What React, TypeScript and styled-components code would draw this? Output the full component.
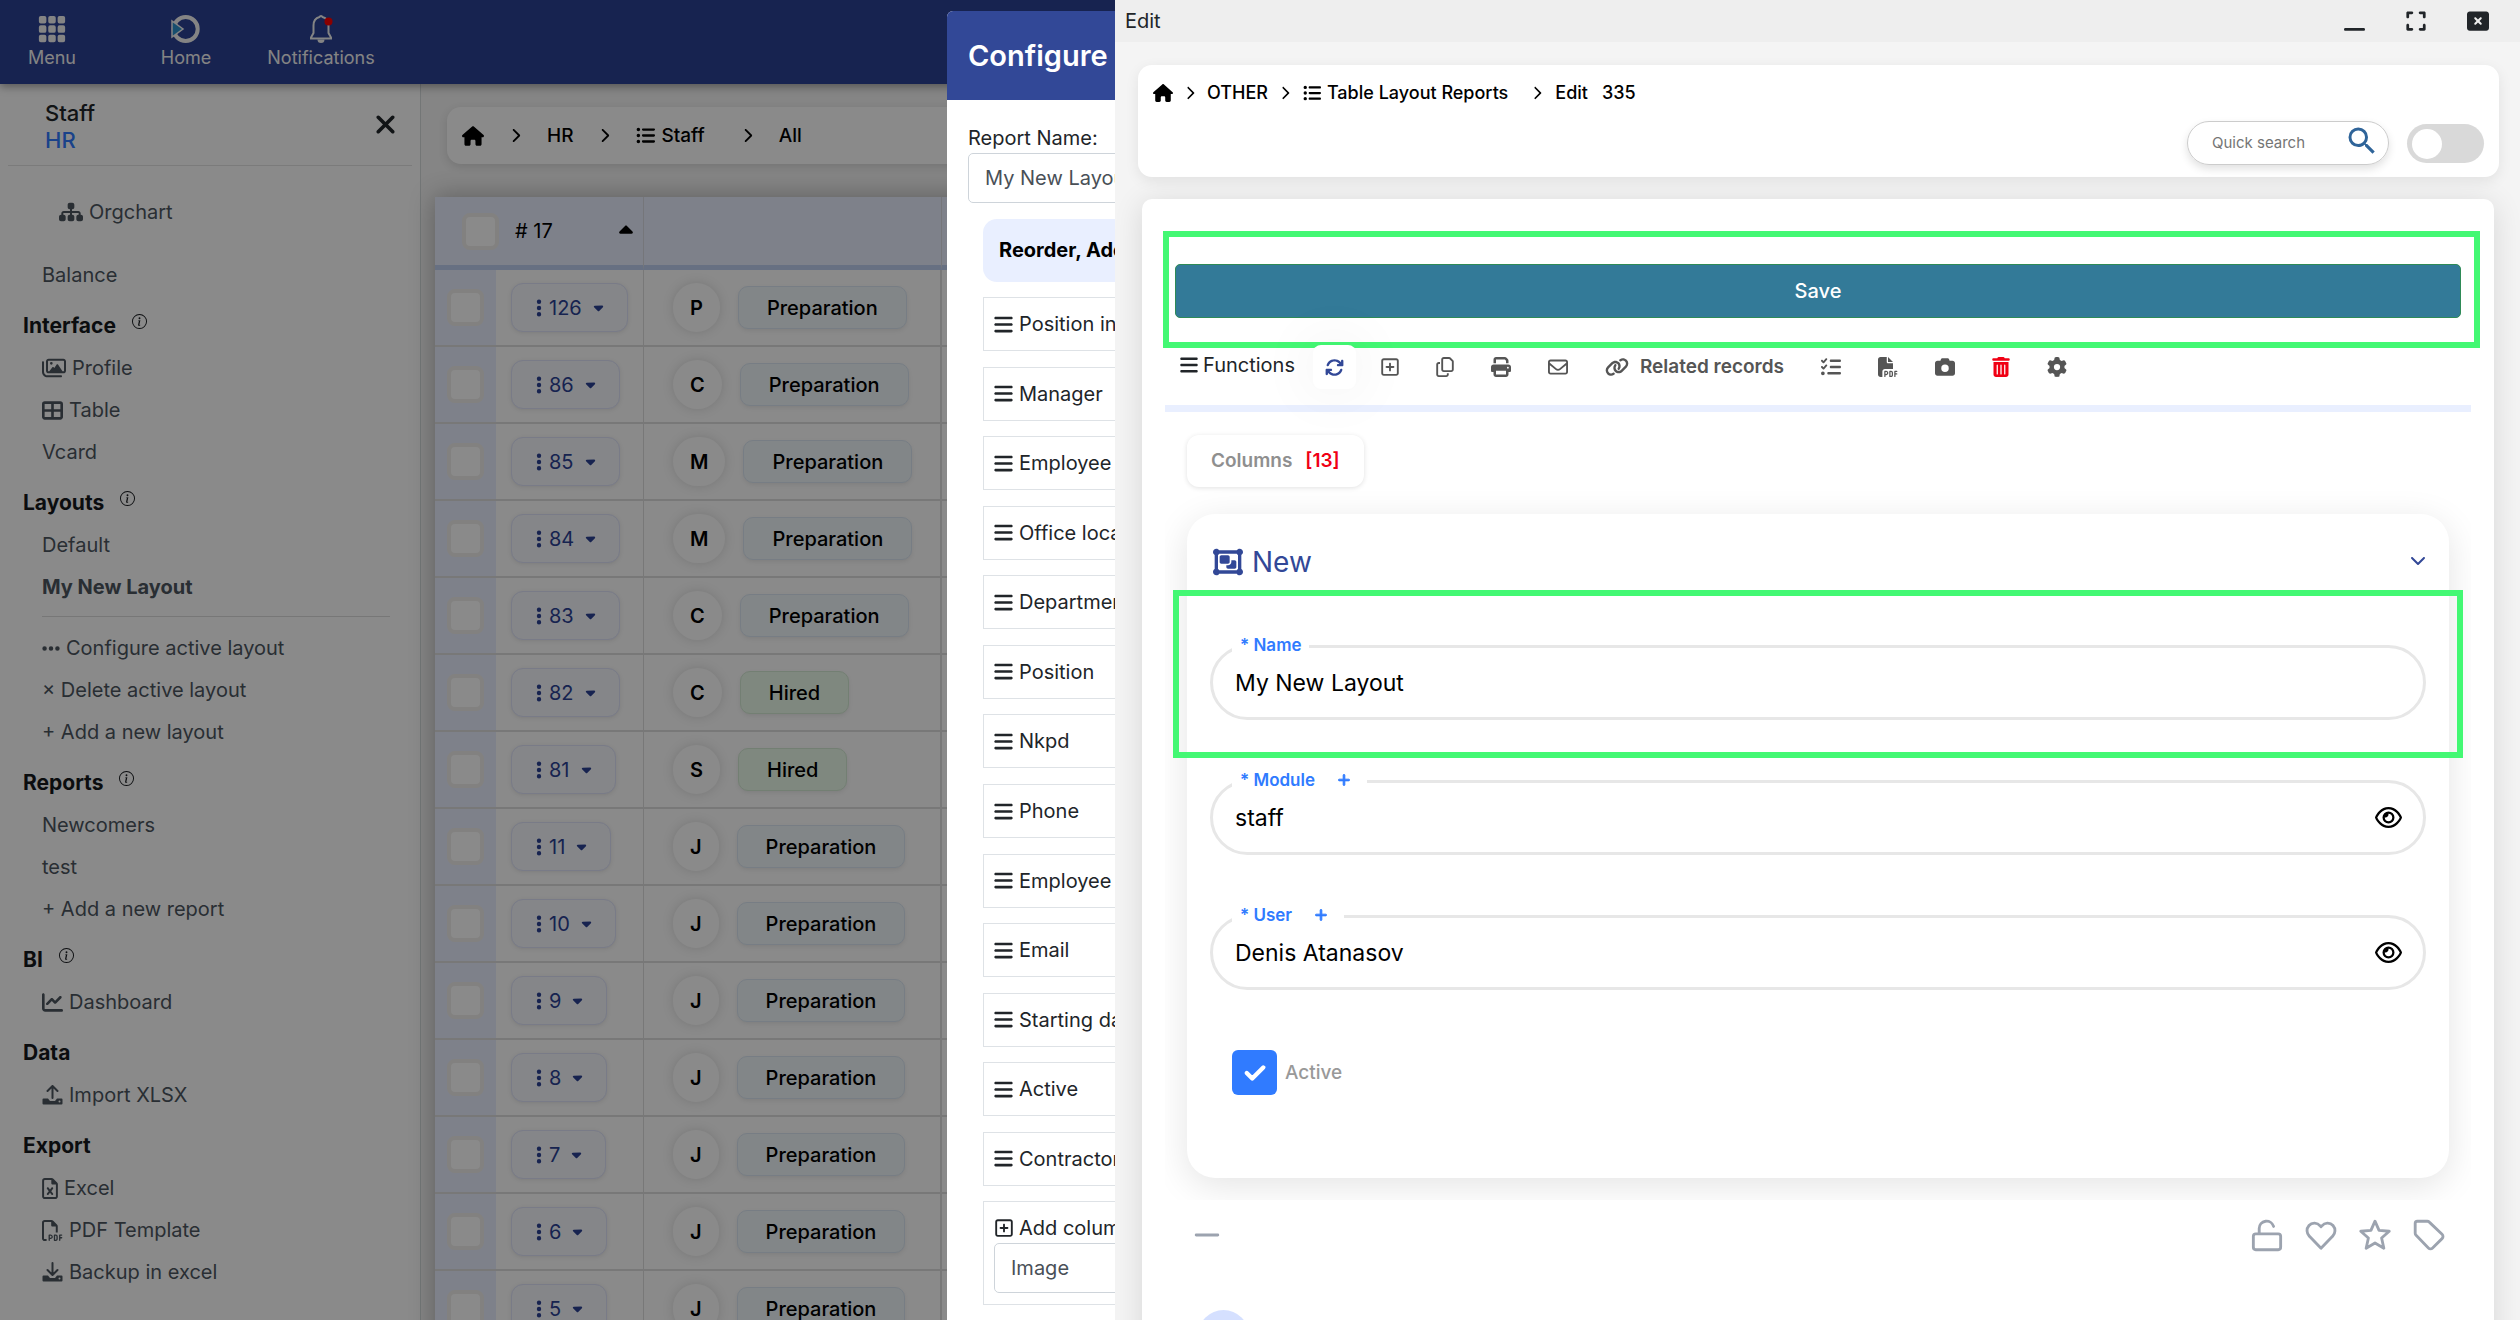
import React from 'react';
import styled, { createGlobalStyle, css } from 'styled-components';
import {
  FaArrowsRotate, FaBars, FaCamera, FaCaretDown, FaCaretUp, FaChartLine, FaCheck, FaChevronDown,
  FaChevronRight, FaEllipsis, FaEllipsisVertical, FaExpand, FaFilePdf, FaGear, FaHouse, FaLink,
  FaListCheck, FaListUl, FaObjectGroup, FaPlus, FaPrint, FaRectangleXmark, FaRegCopy, FaRegEnvelope,
  FaRegEye, FaRegFileExcel, FaRegFilePdf, FaRegImages, FaRegSquarePlus, FaSitemap,
  FaTableCellsLarge, FaTrashCan, FaWindowMinimize, FaXmark,
} from 'react-icons/fa6';
import { BsFillGrid3X3GapFill, BsInfoCircle } from 'react-icons/bs';
import { MdSearch } from 'react-icons/md';

const GlobalStyle = createGlobalStyle`
  *, *::before, *::after { box-sizing: border-box; }
  body {
    margin: 0;
    overflow: hidden;
    font-family: Inter, "Liberation Sans", sans-serif;
    font-size: 20px;
    line-height: 30px;
    color: #212529;
    background: #f5f5f5;
  }
  button, input, select { font: inherit; color: inherit; }
  button { padding: 0; border: 0; background: none; cursor: pointer; }
  a { color: inherit; text-decoration: none; }
  svg { display: block; flex: none; }
`;

/* icons take the width of their own drawing instead of a square */
const naturalIcons = css`
  svg[viewBox='0 0 384 512'] { width: 16px; }
  svg[viewBox='0 0 448 512'] { width: 18px; }
  svg[viewBox='0 0 576 512'],
  svg[viewBox='0 0 640 512'] { width: 24px; height: 24px; }
`;

/* ---------- application behind the dialogs ---------- */

const Page = styled.div`
  display: flex;
  flex-direction: column;
  height: 100vh;
  overflow: hidden;
`;

const TopBar = styled.header`
  display: grid;
  grid-template-columns: 104px 164px 106px;
  flex: none;
  height: 84px;
  background: #2b4194;
  color: #f4f4f4;
  box-shadow: 0 3px 8px rgba(0, 0, 0, 0.35);
  z-index: 1;
`;

const TopItem = styled.button`
  display: flex;
  flex-direction: column;
  align-items: center;
  justify-content: center;
  gap: 2px;
  font-size: 18px;
  line-height: 24px;
  white-space: nowrap;
`;

const Body = styled.div`
  display: flex;
  flex: 1;
  min-height: 0;
`;

const Sidebar = styled.aside`
  flex: none;
  width: 421px;
  border-right: 1px solid #d4dadb;
  background: #fff;
`;

const SideHead = styled.div`
  display: flex;
  align-items: center;
  justify-content: space-between;
  height: 82px;
  margin: 0 8px;
  padding: 4px 12px 0 37px;
  border-bottom: 1px solid #e4e4e4;
  font-size: 22px;
  font-weight: 500;
  line-height: 27px;
  button { margin-bottom: 5px; }
`;

const Module = styled.div`
  color: #307bff;
`;

const SideNav = styled.nav`
  padding-top: 25px;
  color: #4d565f;
`;

const SideLink = styled.a<{ $indent?: boolean; $active?: boolean; $gap?: boolean }>`
  display: flex;
  align-items: center;
  gap: 6px;
  height: 42px;
  margin-top: ${(p) => (p.$gap ? 21 : 0)}px;
  padding-left: ${(p) => (p.$indent ? 59 : 42)}px;
  font-weight: ${(p) => (p.$active ? 700 : 400)};
  ${naturalIcons}
`;

const SideTitle = styled.h2`
  display: flex;
  align-items: center;
  gap: 16px;
  height: 42px;
  margin: 9px 0 0;
  padding-left: 23px;
  font-size: 21px;
  font-weight: 700;
  color: #16191d;
  svg { margin-bottom: 9px; }
`;

const SideRule = styled.hr`
  height: 1px;
  margin: 8px 30px 10px 42px;
  border: 0;
  background: #dcdcdc;
`;

const Main = styled.main`
  flex: 1;
  min-width: 0;
  padding: 23px 26px 0 14px;
`;

const Crumbs = styled.nav`
  display: flex;
  align-items: center;
  height: 57px;
  margin-left: 12px;
  padding-left: 15px;
  border-radius: 14px;
  background: #fff;
  color: #000;
  font-size: 19px;
  font-weight: 500;
  box-shadow: 0 3px 10px rgba(0, 0, 0, 0.12);
`;

const Crumb = styled.a<{ $pad?: number; $listing?: boolean }>`
  display: flex;
  align-items: center;
  gap: 6px;
  padding: 0 ${(p) => p.$pad ?? 24}px;
  ${(p) => p.$listing && css`margin-right: 11px;`}
  &:first-child { padding-left: 0; }
`;

const Grid = styled.table`
  width: 100%;
  margin-top: 33px;
  border-collapse: separate;
  border-spacing: 0;
  table-layout: fixed;
  background: #fff;
  color: #000;
  box-shadow: 0 0 24px rgba(0, 0, 0, 0.3);
`;

const HeadCell = styled.th`
  height: 73px;
  padding: 0;
  border-right: 1px solid #d9dbe2;
  border-bottom: 5px solid #bfd0f1;
  background: #e9efff;
  font-weight: 400;
`;

const HeadInner = styled.div`
  display: flex;
  align-items: center;
  padding: 0 6px 0 27px;
  svg { margin-left: auto; }
`;

const Cell = styled.td<{ $tint?: boolean }>`
  height: 77px;
  padding: 0 0 0 ${(p) => (p.$tint ? 12 : 15)}px;
  border-bottom: 2px solid #dedede;
  border-right: ${(p) => (p.$tint ? '0' : '1px solid #dedede')};
  background: ${(p) => (p.$tint ? '#e9efff' : '#fff')};
`;

const StatusCell = styled(Cell)`
  padding-left: 29px;
  border-right-width: 2px;
`;

const RowCheck = styled.input<{ $head?: boolean }>`
  display: block;
  appearance: none;
  width: 37px;
  height: 37px;
  margin: 0 ${(p) => (p.$head ? 16 : 0)}px 0 0;
  border: 4px solid #f0efec;
  border-radius: 8px;
  background: #fff;
`;

const IdButton = styled.button`
  display: inline-flex;
  align-items: center;
  height: 49px;
  padding: 0 21px 0 17px;
  border: 1px solid #dfe3fa;
  border-radius: 12px;
  background: #f5f7fd;
  color: #2b4194;
  font-size: 20px;
  box-shadow: 0 1px 4px rgba(0, 0, 0, 0.1);
  vertical-align: middle;
  svg:last-child { margin-left: 9px; }
`;

const Status = styled.div`
  display: flex;
  align-items: center;
  gap: 18px;
`;

const Initial = styled.span`
  display: grid;
  place-items: center;
  height: 49px;
  padding: 0 17px;
  border-radius: 25px;
  font-weight: 600;
  box-shadow: 0 0 12px rgba(0, 0, 0, 0.14);
`;

const Badge = styled.span<{ $done?: boolean }>`
  display: grid;
  place-items: center;
  height: 43px;
  padding: 0 28px;
  border: 1px solid ${(p) => (p.$done ? '#d5ebd5' : '#dce8f4')};
  border-radius: 10px;
  background: ${(p) => (p.$done ? '#ebfbea' : '#f0f8fb')};
  font-weight: 500;
  box-shadow: 0 2px 4px rgba(0, 0, 0, 0.08);
`;

/* ---------- layout dialog ---------- */

const Backdrop = styled.div`
  position: fixed;
  inset: 0;
  z-index: 2;
  display: flex;
  justify-content: center;
  align-items: flex-start;
  padding-top: 11px;
  background: rgba(0, 0, 0, 0.46);
`;

const Dialog = styled.section`
  width: 626px;
  border-radius: 6px;
  overflow: hidden;
  background: #fff;
`;

const DialogHead = styled.h1`
  display: flex;
  align-items: center;
  height: 89px;
  margin: 0;
  padding: 0 21px;
  background: #324897;
  color: #fff;
  font-size: 29px;
  font-weight: 600;
`;

const DialogBody = styled.div`
  padding: 23px 21px 40px;
`;

const boxed = css`
  display: block;
  width: 100%;
  height: 50px;
  padding: 0 16px;
  border: 1px solid #ced4da;
  border-radius: 5px;
  background: #fff;
  color: #495057;
`;

const DialogInput = styled.input`${boxed}`;
const DialogSelect = styled.select`
  ${boxed}
  appearance: none;
`;

const DialogLabel = styled.label`
  display: block;
`;

const Columns = styled.div`
  padding: 16px 15px 0;
`;

const ColumnsTitle = styled.h3`
  margin: 0 0 15px;
  padding: 16px 16px 17px;
  border-radius: 14px;
  background: #e9efff;
  color: #000;
  font-size: 20px;
  font-weight: 700;
  line-height: 30px;
`;

const ColumnList = styled.ul`
  display: flex;
  flex-direction: column;
  justify-content: space-between;
  height: 889px;
  margin: 0;
  padding: 0;
  list-style: none;
`;

const ColumnItem = styled.li`
  display: flex;
  align-items: center;
  gap: 5px;
  height: 54px;
  padding-left: 9px;
  border: 1px solid #dee2e6;
`;

const AddColumn = styled.div`
  margin-top: 15px;
  padding: 11px 10px;
  border: 1px solid #dee2e6;
  label {
    display: flex;
    align-items: center;
    gap: 5px;
  }
`;

/* ---------- edit panel ---------- */

const Panel = styled.section`
  position: fixed;
  inset: 0 0 0 1115px;
  z-index: 3;
  display: flex;
  flex-direction: column;
  background: #f4f4f4;
  overflow: hidden;
`;

const PanelBar = styled.header`
  display: flex;
  align-items: center;
  justify-content: space-between;
  flex: none;
  height: 42px;
  padding: 0 31px 0 10px;
  background: #eee;
`;

const WindowButtons = styled.div`
  display: flex;
  align-items: center;
  gap: 40px;
`;

const CrumbCard = styled.div`
  flex: none;
  margin: 23px 21px 0 23px;
  padding: 12px 15px;
  border-radius: 14px;
  background: #fff;
  color: #000;
  font-size: 18px;
  font-weight: 500;
  box-shadow: 0 4px 14px rgba(0, 0, 0, 0.08);
`;

const CrumbRow = styled.nav`
  display: flex;
  align-items: center;
  height: 32px;
`;

const Tools = styled.div`
  display: flex;
  justify-content: flex-end;
  align-items: center;
  gap: 18px;
  height: 44px;
  margin-top: 12px;
`;

const Search = styled.label`
  display: flex;
  align-items: center;
  width: 202px;
  height: 44px;
  padding: 0 8px 0 24px;
  border: 1px solid #ccc;
  border-radius: 22px;
  color: #2f6499;
  box-shadow: 0 4px 8px rgba(0, 0, 0, 0.12);
  input {
    flex: 1;
    min-width: 0;
    padding: 0;
    border: 0;
    outline: 0;
    background: none;
    font-size: 15px;
    font-weight: 400;
  }
  input::placeholder { color: #757575; opacity: 1; }
  svg { margin-bottom: 4px; }
`;

const Toggle = styled.input`
  appearance: none;
  width: 77px;
  height: 39px;
  margin: 0;
  padding: 5px;
  border-radius: 20px;
  background: #d9d9d9;
  &::before {
    content: '';
    display: block;
    width: 30px;
    height: 30px;
    border-radius: 50%;
    background: #fff;
  }
`;

const Sheet = styled.div`
  flex: 1 0 auto;
  margin: 22px 26px 0 27px;
  padding: 32px 23px 0 23px;
  border-radius: 10px;
  background: #fff;
  box-shadow: 0 4px 30px rgba(0, 0, 0, 0.12);
`;

const frame = css`
  border: 6px solid #43f873;
`;

const SaveFrame = styled.div`
  ${frame}
  margin: 0 -9px 0 -2px;
  padding: 27px 13px 24px 6px;
`;

const SaveButton = styled.button`
  display: block;
  width: 100%;
  height: 54px;
  border: 1px solid #2e8b57;
  border-radius: 5px;
  background: #337a98;
  color: #fff;
  font-weight: 500;
`;

const Toolbar = styled.div`
  display: flex;
  align-items: center;
  gap: 13px;
  height: 64px;
  padding: 0 0 19px 15px;
  border-bottom: 7px solid #e9efff;
  color: #555;
  ${naturalIcons}
`;

const FunctionsLabel = styled.span`
  display: flex;
  align-items: center;
  gap: 5px;
  margin: 0 5px 5px 0;
  color: #212529;
`;

const Tool = styled.button<{ $tone?: 'active' | 'danger' }>`
  display: flex;
  align-items: center;
  gap: 11px;
  height: 44px;
  padding: 0 12px;
  border-radius: 8px;
  font-size: 19px;
  font-weight: 600;
  ${(p) => p.$tone === 'danger' && css`color: #f00014;`}
  ${(p) => p.$tone === 'active' && css`
    background: #fff;
    color: #324897;
    box-shadow: 0 0 60px rgba(0, 0, 0, 0.08);
  `}
`;

const Tab = styled.button`
  display: flex;
  align-items: center;
  gap: 13px;
  height: 52px;
  margin: 23px 0 0 22px;
  padding: 0 24px;
  border-radius: 12px;
  background: #fff;
  color: #8f8f8f;
  font-size: 19px;
  font-weight: 600;
  box-shadow: 0 1px 5px rgba(0, 0, 0, 0.12);
  b { color: #f00014; font-weight: 600; }
`;

const FormArea = styled.div`
  overflow: hidden;
  margin-bottom: 17px;
  padding: 27px 22px 22px;
`;

const FormCard = styled.form`
  display: flex;
  flex-direction: column;
  gap: 60px;
  padding: 30px 23px 83px;
  border-radius: 28px;
  background: #fff;
  box-shadow: 0 8px 36px rgba(0, 0, 0, 0.11);
`;

const FormTitle = styled.h2`
  display: flex;
  align-items: center;
  gap: 9px;
  height: 36px;
  margin: 0 0 5px;
  padding: 0 0 0 3px;
  color: #324897;
  font-size: 28px;
  font-weight: 400;
  button { margin: 0 0 4px auto; }
`;

const Field = styled.div`
  position: relative;
  display: flex;
  align-items: center;
  height: 75px;
  padding: 0 21px 0 22px;
  border: 3px solid #e7e7e7;
  border-radius: 38px;
  color: #000;
  input {
    flex: 1;
    min-width: 0;
    padding: 0;
    border: 0;
    outline: 0;
    background: none;
    font-size: 23px;
  }
`;

const FieldLabel = styled.div`
  position: absolute;
  left: 19px;
  top: -17px;
  display: flex;
  align-items: center;
  gap: 22px;
  height: 28px;
  padding: 0 8px;
  background: #fff;
  color: #307bff;
  font-size: 17px;
  font-weight: 600;
  button { margin-right: 8px; }
  path { stroke: currentColor; stroke-width: 30; }
`;

const FieldFrame = styled.div`
  ${frame}
  position: absolute;
  inset: -58px -40px -41px -40px;
  pointer-events: none;
`;

const CheckLabel = styled.label`
  display: flex;
  align-items: center;
  gap: 8px;
  margin-left: 22px;
  color: #999;
  font-size: 19px;
  font-weight: 500;
`;

const CheckBox = styled.span`
  display: grid;
  width: 45px;
  height: 45px;
  color: #fff;
  > * { grid-area: 1 / 1; place-self: center; }
  input {
    appearance: none;
    width: 45px;
    height: 45px;
    margin: 0;
    border-radius: 6px;
    background: #307bff;
  }
  svg { z-index: 1; }
  path { stroke: currentColor; stroke-width: 36; }
`;

const SheetFoot = styled.footer`
  display: flex;
  align-items: center;
  gap: 18px;
  margin: 0 24px;
  color: #9ca3af;
  button:first-child { margin-right: auto; }
`;

const AvatarDot = styled.div`
  width: 51px;
  height: 51px;
  margin: 57px 0 0 33px;
  border-radius: 50%;
  background: #d5e0ff;
`;

/* ---------- drawings ---------- */

const HomeMark = () => (
  <svg width="30" height="30" viewBox="0 0 30 30">
    <circle cx="14.700" cy="15" r="12" fill="none" stroke="#f4f4f4" strokeWidth="4" />
    <path d="M1 7v16l11-8z" fill="#2b91cc" stroke="#f4f4f4" strokeWidth="1.500" />
  </svg>
);

const BellMark = () => (
  <svg width="30" height="30" viewBox="0 0 30 30" fill="none" stroke="#f4f4f4" strokeWidth="2">
    <path d="M13.500 3a1.600 1.600 0 0 1 3 0c4 1 6 4.500 6 8.500v7.500l2.500 4.500v1H5v-1l2.500-4.500v-7.500c0-4 2-7.500 6-8.500z" />
    <path d="M11.500 25.500a3.500 3.500 0 0 0 7 0z" fill="#f4f4f4" stroke="none" />
    <circle cx="22.500" cy="7.500" r="4" fill="#f00" stroke="none" />
  </svg>
);

const DriveMark = ({ down }: { down?: boolean }) => (
  <svg width="21" height="20" viewBox="0 0 21 20" fill="none" stroke="currentColor" strokeWidth="2" strokeLinecap="round" strokeLinejoin="round">
    <path d={down ? 'M10.500 1v11M5.500 8l5 5 5-5' : 'M10.500 13V1.500M5.500 6l5-5 5 5'} />
    <path d="M1.500 13.500h4.500l2 2.500h5l2-2.500h4.500a1 1 0 0 1 1 1v4a1 1 0 0 1-1 1h-18a1 1 0 0 1-1-1v-4a1 1 0 0 1 1-1z" fill="currentColor" stroke="none" />
    <circle cx="17.500" cy="16.500" r="1" fill="#fff" stroke="none" />
  </svg>
);

const Outline = ({ d }: { d: string }) => (
  <svg width="36" height="36" viewBox="0 0 24 24" fill="none" stroke="currentColor" strokeWidth="1.900" strokeLinecap="round" strokeLinejoin="round">
    <path d={d} />
  </svg>
);

const footActions = [
  { name: 'Unlock', d: 'M6.800 11.200V7.700a4.900 4.900 0 0 1 9.600-1.400M4.500 11.200h15a1.600 1.600 0 0 1 1.600 1.600v7.400a1.600 1.600 0 0 1-1.600 1.600h-15a1.600 1.600 0 0 1-1.600-1.600v-7.400a1.600 1.600 0 0 1 1.600-1.600z' },
  { name: 'Favourite', d: 'M12 20.800l-7.700-7.900a5.200 5.200 0 0 1-.3-7.200c2-2.300 5.600-2 7.400.200l.600.600.600-.600c1.800-2.200 5.400-2.500 7.400-.200a5.200 5.200 0 0 1-.300 7.200z' },
  { name: 'Star', d: 'M12 2.800l2.700 6.100 6.800.6-5.100 4.500 1.500 6.800-5.900-3.500-5.900 3.500 1.500-6.800-5.100-4.500 6.800-.600z' },
  { name: 'Tag', d: 'M4.200 2.800h6.600a2 2 0 0 1 1.400.6l8.500 8.100a2 2 0 0 1 0 2.900l-6.300 6.200a2 2 0 0 1-2.800 0l-8.200-8.400a2 2 0 0 1-.600-1.400V4.200a1.400 1.400 0 0 1 1.400-1.400z' },
];

/* ---------- data ---------- */

const staff = [
  ['126', 'P'], ['86', 'C'], ['85', 'M'], ['84', 'M'], ['83', 'C'], ['82', 'C', 'Hired'], ['81', 'S', 'Hired'],
  ['11', 'J'], ['10', 'J'], ['9', 'J'], ['8', 'J'], ['7', 'J'], ['6', 'J'], ['5', 'J'],
];

const columns = [
  'Position in the company', 'Manager', 'Employee number', 'Office location', 'Department', 'Position', 'Nkpd',
  'Phone', 'Employee status', 'Email', 'Starting date', 'Active', 'Contractor',
];

const Info = () => <BsInfoCircle size={15} />;

export default function App() {
  return (
    <>
      <GlobalStyle />
      <Page>
        <TopBar>
          <TopItem><BsFillGrid3X3GapFill size={30} />Menu</TopItem>
          <TopItem><HomeMark />Home</TopItem>
          <TopItem><BellMark />Notifications</TopItem>
        </TopBar>
        <Body>
          <Sidebar>
            <SideHead>
              <div>
                <div>Staff</div>
                <Module>HR</Module>
              </div>
              <button aria-label="Close sidebar"><FaXmark size={29} /></button>
            </SideHead>
            <SideNav>
              <SideLink href="#" $indent><FaSitemap />Orgchart</SideLink>
              <SideLink href="#" $gap>Balance</SideLink>
              <SideTitle>Interface<Info /></SideTitle>
              <SideLink href="#"><FaRegImages />Profile</SideLink>
              <SideLink href="#"><FaTableCellsLarge size={21} />Table</SideLink>
              <SideLink href="#">Vcard</SideLink>
              <SideTitle>Layouts<Info /></SideTitle>
              <SideLink href="#">Default</SideLink>
              <SideLink href="#" $active>My New Layout</SideLink>
              <SideRule />
              <SideLink href="#"><FaEllipsis size={21} />Configure active layout</SideLink>
              <SideLink href="#">× Delete active layout</SideLink>
              <SideLink href="#">+ Add a new layout</SideLink>
              <SideTitle>Reports<Info /></SideTitle>
              <SideLink href="#">Newcomers</SideLink>
              <SideLink href="#">test</SideLink>
              <SideLink href="#">+ Add a new report</SideLink>
              <SideTitle>BI<Info /></SideTitle>
              <SideLink href="#"><FaChartLine size={21} />Dashboard</SideLink>
              <SideTitle>Data</SideTitle>
              <SideLink href="#"><DriveMark />Import XLSX</SideLink>
              <SideTitle>Export</SideTitle>
              <SideLink href="#"><FaRegFileExcel size={21} />Excel</SideLink>
              <SideLink href="#"><FaRegFilePdf size={21} />PDF Template</SideLink>
              <SideLink href="#"><DriveMark down />Backup in excel</SideLink>
            </SideNav>
          </Sidebar>
          <Main>
            <Crumbs aria-label="Breadcrumb">
              <Crumb href="#" aria-label="Home"><FaHouse size={22} /></Crumb>
              <FaChevronRight size={15} />
              <Crumb href="#">HR</Crumb>
              <FaChevronRight size={15} />
              <Crumb href="#" $listing><FaListUl size={19} />Staff</Crumb>
              <FaChevronRight size={15} />
              <Crumb href="#">All</Crumb>
            </Crumbs>
            <Grid>
              <colgroup>
                <col style={{ width: 61 }} />
                <col style={{ width: 148 }} />
                <col style={{ width: 298 }} />
                <col />
              </colgroup>
              <thead>
                <tr>
                  <HeadCell colSpan={2}>
                    <HeadInner>
                      <RowCheck type="checkbox" aria-label="Select all" $head />
                      # 17
                      <FaCaretUp size={22} />
                    </HeadInner>
                  </HeadCell>
                  <HeadCell />
                  <HeadCell />
                </tr>
              </thead>
              <tbody>
                {staff.map(([id, initial, status]) => (
                  <tr key={id}>
                    <Cell $tint><RowCheck type="checkbox" aria-label={`Select ${id}`} /></Cell>
                    <Cell>
                      <IdButton><FaEllipsisVertical size={20} />{id}<FaCaretDown size={15} /></IdButton>
                    </Cell>
                    <StatusCell>
                      <Status>
                        <Initial>{initial}</Initial>
                        <Badge $done={!!status}>{status ?? 'Preparation'}</Badge>
                      </Status>
                    </StatusCell>
                    <Cell />
                  </tr>
                ))}
              </tbody>
            </Grid>
          </Main>
        </Body>
      </Page>

      <Backdrop>
        <Dialog role="dialog" aria-labelledby="dialog-title">
          <DialogHead id="dialog-title">Configure active layout</DialogHead>
          <DialogBody>
            <DialogLabel htmlFor="report-name">Report Name:</DialogLabel>
            <DialogInput id="report-name" defaultValue="My New Layout" />
            <Columns>
              <ColumnsTitle>Reorder, Add or Remove Columns</ColumnsTitle>
              <ColumnList>
                {columns.map((name) => (
                  <ColumnItem key={name}><FaBars size={21} />{name}</ColumnItem>
                ))}
              </ColumnList>
              <AddColumn>
                <label htmlFor="add-column"><FaRegSquarePlus size={20} />Add column</label>
                <DialogSelect id="add-column" defaultValue="Image">
                  <option>Image</option>
                </DialogSelect>
              </AddColumn>
            </Columns>
          </DialogBody>
        </Dialog>
      </Backdrop>

      <Panel>
        <PanelBar>
          <span>Edit</span>
          <WindowButtons>
            <button aria-label="Minimize"><FaWindowMinimize size={21} /></button>
            <button aria-label="Maximize"><FaExpand size={22} /></button>
            <button aria-label="Close"><FaRectangleXmark size={22} /></button>
          </WindowButtons>
        </PanelBar>

        <CrumbCard>
          <CrumbRow aria-label="Record breadcrumb">
            <Crumb href="#" $pad={10} aria-label="Home"><FaHouse size={20} /></Crumb>
            <FaChevronRight size={14} />
            <Crumb href="#" $pad={10}>OTHER</Crumb>
            <FaChevronRight size={14} />
            <Crumb href="#" $pad={11}><FaListUl size={18} />Table Layout Reports</Crumb>
            <Crumb as="span" $pad={11}><FaChevronRight size={14} /></Crumb>
            <span>Edit</span>
            <Crumb as="span" $pad={14}>335</Crumb>
          </CrumbRow>
          <Tools>
            <Search>
              <input type="search" placeholder="Quick search" aria-label="Quick search" />
              <MdSearch size={36} />
            </Search>
            <Toggle type="checkbox" role="switch" aria-label="Edit mode" />
          </Tools>
        </CrumbCard>

        <Sheet>
          <SaveFrame><SaveButton>Save</SaveButton></SaveFrame>
          <Toolbar>
            <FunctionsLabel><FaBars size={20} />Functions</FunctionsLabel>
            <Tool $tone="active" aria-label="Refresh"><FaArrowsRotate size={19} /></Tool>
            <Tool aria-label="Add"><FaRegSquarePlus size={20} /></Tool>
            <Tool aria-label="Copy"><FaRegCopy size={20} /></Tool>
            <Tool aria-label="Print"><FaPrint size={20} /></Tool>
            <Tool aria-label="Mail"><FaRegEnvelope size={20} /></Tool>
            <Tool><FaLink />Related records</Tool>
            <Tool aria-label="Checklist"><FaListCheck size={20} /></Tool>
            <Tool aria-label="PDF"><FaFilePdf size={20} /></Tool>
            <Tool aria-label="Camera"><FaCamera size={20} /></Tool>
            <Tool $tone="danger" aria-label="Delete"><FaTrashCan size={20} /></Tool>
            <Tool aria-label="Settings"><FaGear size={20} /></Tool>
          </Toolbar>
          <Tab>Columns <b>[13]</b></Tab>
          <FormArea>
            <FormCard>
              <FormTitle>
                <FaObjectGroup size={30} />New
                <button type="button" aria-label="Collapse"><FaChevronDown size={16} /></button>
              </FormTitle>
              <Field>
                <FieldLabel><label htmlFor="name">* Name</label></FieldLabel>
                <input id="name" defaultValue="My New Layout" />
                <FieldFrame />
              </Field>
              <Field>
                <FieldLabel>
                  <label htmlFor="module">* Module</label>
                  <button type="button" aria-label="Add module"><FaPlus size={14} /></button>
                </FieldLabel>
                <input id="module" defaultValue="staff" />
                <button type="button" aria-label="View module"><FaRegEye size={27} /></button>
              </Field>
              <Field>
                <FieldLabel>
                  <label htmlFor="user">* User</label>
                  <button type="button" aria-label="Add user"><FaPlus size={14} /></button>
                </FieldLabel>
                <input id="user" defaultValue="Denis Atanasov" />
                <button type="button" aria-label="View user"><FaRegEye size={27} /></button>
              </Field>
              <CheckLabel>
                <CheckBox><input type="checkbox" defaultChecked /><FaCheck size={22} /></CheckBox>
                Active
              </CheckLabel>
            </FormCard>
          </FormArea>
          <SheetFoot>
            <button aria-label="Collapse section"><Outline d="M4.800 12h14.400" /></button>
            {footActions.map((action) => (
              <button key={action.name} aria-label={action.name}><Outline d={action.d} /></button>
            ))}
          </SheetFoot>
          <AvatarDot />
        </Sheet>
      </Panel>
    </>
  );
}
